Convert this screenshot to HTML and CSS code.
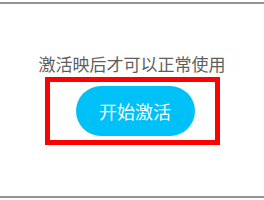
FILE: index.html
```html
<!DOCTYPE html>
<html lang="zh-CN">
<head>
    <meta charset="UTF-8">
    <meta name="viewport" content="width=device-width, initial-scale=1.0">
    <title>激活</title>
    <link rel="stylesheet" href="styles.css">
</head>
<body>
    <div class="panel">
        <p class="tip">激活映后才可以正常使用</p>
        <div class="highlight">
            <button class="btn">开始激活</button>
        </div>
    </div>
</body>
</html>
```

FILE: styles.css
```css
body {
    margin: 0;
    background: white;
    font-family: "Noto Sans CJK SC", sans-serif;
}
.panel {
    margin-top: 2px;
    height: 196px;
    border-top: 2px solid #939393;
    border-bottom: 2px solid #939393;
    display: flex;
    flex-direction: column;
    align-items: center;
    padding-top: 48px;
    box-sizing: border-box;
}
.tip {
    margin: 0;
    font-size: 17px;
    line-height: 24px;
    color: #5e5e5e;
}
.highlight {
    margin-top: 1px;
    width: 159px;
    height: 58px;
    border: 5px solid #ff0000;
    display: flex;
    align-items: center;
    justify-content: center;
    padding-left: 6px;
}
.btn {
    width: 119px;
    height: 50px;
    border: none;
    border-radius: 25px;
    background: #00c0f8;
    color: white;
    font-family: inherit;
    font-size: 18px;
    padding: 0;
}
```
